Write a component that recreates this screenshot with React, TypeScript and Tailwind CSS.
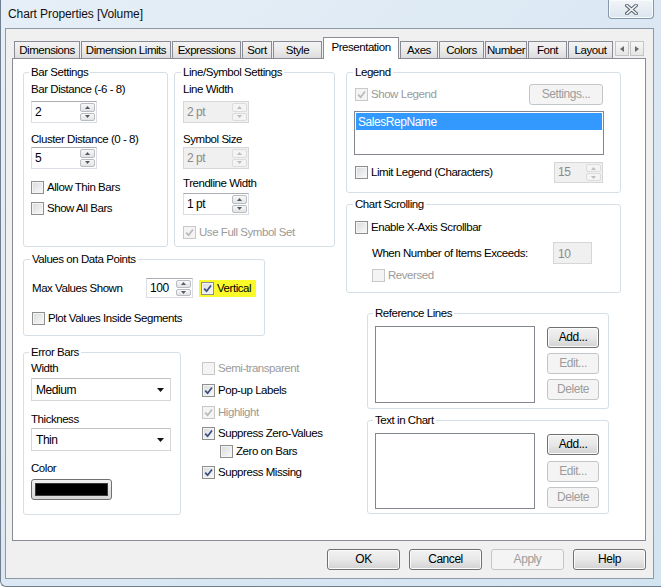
import type { ReactNode } from "react";

function Check({ checked, disabled }: { checked?: boolean; disabled?: boolean }) {
  return (
    <span
      className={`flex h-[13px] w-[13px] shrink-0 items-center justify-center border ${
        disabled
          ? "border-[#c8c8c8] bg-[#f4f4f4]"
          : "border-[#8e8f8f] bg-linear-to-br from-[#d8dadd] to-[#fafafa] shadow-[inset_0_0_0_1px_#f4f4f4]"
      }`}
    >
      {checked && (
        <svg width="9" height="9" viewBox="0 0 9 9">
          <path
            d="M1.2 4.6 L3.6 7.2 L8 1.4"
            fill="none"
            stroke={disabled ? "#b9b9b9" : "#3b4d86"}
            strokeWidth="1.7"
          />
        </svg>
      )}
    </span>
  );
}

function CheckRow({
  label,
  checked,
  disabled,
  className = "",
}: {
  label: string;
  checked?: boolean;
  disabled?: boolean;
  className?: string;
}) {
  return (
    <div className={`flex h-[13px] items-center gap-[3px] ${className}`}>
      <Check checked={checked} disabled={disabled} />
      <span className={`whitespace-nowrap leading-[13px] ${disabled ? "text-[#9a9a9a]" : "text-black"}`}>{label}</span>
    </div>
  );
}

function SpinBtn({ up, disabled }: { up?: boolean; disabled?: boolean }) {
  return (
    <span
      className={`flex flex-1 items-center justify-center rounded-[2px] border ${
        disabled ? "border-[#dcdcdc] bg-[#f4f4f4]" : "border-[#b9bcc0] bg-linear-to-b from-[#f8f8f8] to-[#e2e3e5]"
      }`}
    >
      <svg width="5" height="3" viewBox="0 0 5 3">
        <path d={up ? "M0 3 L2.5 0 L5 3Z" : "M0 0 L2.5 3 L5 0Z"} fill={disabled ? "#bdbdbd" : "#555a60"} />
      </svg>
    </span>
  );
}

function Spin({ value, className = "", disabled }: { value: string; className?: string; disabled?: boolean }) {
  return (
    <div
      className={`flex border ${
        disabled
          ? "border-[#d6d6d6] bg-[#f0f0f0] text-[#8a8a8a]"
          : "border-[#dadde3] border-t-[#abadb3] bg-white text-black"
      } ${className}`}
    >
      <span className="flex flex-1 items-center pl-[3px] pb-[1px] text-[12px]">{value}</span>
      <div className="flex w-[17px] flex-col gap-px p-px">
        <SpinBtn up disabled={disabled} />
        <SpinBtn disabled={disabled} />
      </div>
    </div>
  );
}

function Select({ value }: { value: string }) {
  return (
    <div className="flex h-[23px] w-[140px] items-center justify-between border border-[#d6d6d6] border-t-[#c2c2c2] bg-white pl-[4px] pr-[6px] text-[12px]">
      <span>{value}</span>
      <svg width="7" height="4" viewBox="0 0 7 4">
        <path d="M0 0 L7 0 L3.5 4Z" fill="#111" />
      </svg>
    </div>
  );
}

function Btn({ children, disabled, className = "" }: { children: ReactNode; disabled?: boolean; className?: string }) {
  return (
    <button
      type="button"
      className={`flex h-[21px] items-center justify-center rounded-[3px] border text-[12px] leading-[13px] ${
        disabled
          ? "border-[#c3c6c9] bg-[#f4f4f4] text-[#9c9c9c]"
          : "border-[#707070] bg-linear-to-b from-[#f2f2f2] via-[#e8e8e8] to-[#d2d2d2] text-black shadow-[inset_0_0_0_1px_#fbfbfb]"
      } ${className}`}
    >
      {children}
    </button>
  );
}

function Group({
  title,
  className = "",
  children,
}: {
  title: string;
  className?: string;
  children?: ReactNode;
}) {
  return (
    <fieldset className={`flex min-w-0 flex-col rounded-[3px] border border-[#d5dfe5] ${className}`}>
      <legend className="-ml-[2px] whitespace-nowrap px-[2px] leading-[13px]">{title}</legend>
      {children}
    </fieldset>
  );
}

const tabs: [string, string][] = [
  ["Dimensions", "w-[66px]"],
  ["Dimension Limits", "w-[90px]"],
  ["Expressions", "w-[69px]"],
  ["Sort", "w-[30px]"],
  ["Style", "w-[49px]"],
  ["Presentation", "w-[76px]"],
  ["Axes", "w-[38px]"],
  ["Colors", "w-[45px]"],
  ["Number", "w-[42px]"],
  ["Font", "w-[39px]"],
  ["Layout", "w-[45px]"],
];

export default function App() {
  return (
    <div className="h-[587px] w-[661px] overflow-hidden rounded-bl-[6px] border-b border-l border-[#6f7f8f] bg-linear-to-br from-[#e6eff7] via-[#dbe8f3] to-[#d3e4f1] font-['Liberation_Sans',Arial,sans-serif] text-[11.5px] tracking-[-0.45px] text-black">
      {/* Title bar */}
      <div className="flex h-[28px]">
        <div className="pl-[7px] pt-[6px] text-[12px] leading-[16px] tracking-[-0.1px] text-[#111]">
          Chart Properties [Volume]
        </div>
        <div className="ml-auto mr-[7px] flex h-[19px] w-[46px] items-center justify-center rounded-b-[4px] border border-t-0 border-[#8597ab] bg-linear-to-b from-[#f1f5f9] to-[#dbe5ee] shadow-[inset_0_0_0_1px_#f8fbfd]">
          <svg width="13" height="11" viewBox="0 0 13 11">
            <path d="M2 1.5 L11 9.5 M11 1.5 L2 9.5" stroke="#59626c" strokeWidth="3.6" strokeLinecap="square" />
            <path d="M2 1.5 L11 9.5 M11 1.5 L2 9.5" stroke="#f4f6f8" strokeWidth="1.6" strokeLinecap="square" />
          </svg>
        </div>
      </div>

      {/* Client area */}
      <div className="ml-[4px] mr-[7px] h-[551px] border border-[#8d9aa6] bg-[#f0f0f0] pl-[6px] pr-[7px] pt-[8px]">
        {/* Tabs */}
        <div className="flex h-[21px] items-end gap-[1px] pl-[2px]">
          {tabs.map(([name, w]) =>
            name === "Presentation" ? (
              <div
                key={name}
                className={`relative z-10 -mb-[1px] flex h-[22px] ${w} items-start justify-center border border-b-0 border-[#898c95] bg-white pt-[3px] leading-[13px]`}
              >
                {name}
              </div>
            ) : (
              <div
                key={name}
                className={`flex h-[17px] ${w} items-center justify-center whitespace-nowrap border border-b-0 border-[#898c95] bg-linear-to-b from-[#f3f3f3] via-[#ebebeb] to-[#dcdcdc] leading-[13px]`}
              >
                {name}
              </div>
            )
          )}
          <div className="mb-[2px] ml-[1px] flex h-[15px] gap-[1px]">
            {["M4 0 L0 3 L4 6Z", "M0 0 L4 3 L0 6Z"].map((d) => (
              <div key={d} className="flex w-[14px] items-center justify-center border border-[#c5c5c5] bg-linear-to-b from-[#f7f7f7] to-[#e6e6e6]">
                <svg width="4" height="6" viewBox="0 0 4 6">
                  <path d={d} fill="#6b6b6b" />
                </svg>
              </div>
            ))}
          </div>
        </div>

        {/* Tab page */}
        <div className="flex h-[483px] w-[634px] gap-[11px] border border-[#898c95] bg-white pl-[10px] pt-[7px]">
          {/* Left column */}
          <div className="flex w-[312px] flex-col">
            <div className="flex gap-[6px]">
              <Group title="Bar Settings" className="h-[181px] w-[145px] px-[7px]">
                <div className="mt-[4px] leading-[13px]">Bar Distance (-6 - 8)</div>
                <Spin value="2" className="mt-[5px] h-[22px] w-[66px]" />
                <div className="mt-[10px] leading-[13px]">Cluster Distance (0 - 8)</div>
                <Spin value="5" className="mt-[1px] h-[22px] w-[66px]" />
                <CheckRow label="Allow Thin Bars" className="mt-[12px]" />
                <CheckRow label="Show All Bars" className="mt-[8px]" />
              </Group>
              <Group title="Line/Symbol Settings" className="h-[181px] w-[161px] px-[8px]">
                <div className="mt-[4px] leading-[13px]">Line Width</div>
                <Spin value="2 pt" disabled className="mt-[5px] h-[22px] w-[66px]" />
                <div className="mt-[10px] leading-[13px]">Symbol Size</div>
                <Spin value="2 pt" disabled className="mt-[1px] h-[22px] w-[66px]" />
                <div className="mt-[8px] leading-[13px]">Trendline Width</div>
                <Spin value="1 pt" className="mt-[3px] h-[22px] w-[66px]" />
                <CheckRow label="Use Full Symbol Set" checked disabled className="mt-[11px]" />
              </Group>
            </div>

            <Group title="Values on Data Points" className="mt-[6px] h-[83px] w-[242px] px-[8px]">
              <div className="mt-[12px] flex h-[20px] items-center">
                <span className="w-[114px] leading-[13px]">Max Values Shown</span>
                <Spin value="100" className="h-[20px] w-[47px]" />
                <div className="ml-[6px] flex h-[17px] w-[57px] items-center bg-[#fafa2a] pl-[2px]">
                  <CheckRow label="Vertical" checked />
                </div>
              </div>
              <CheckRow label="Plot Values Inside Segments" className="mt-[14px]" />
            </Group>

            <div className="mt-[10px] flex">
              <Group title="Error Bars" className="h-[169px] w-[158px] px-[7px]">
                <div className="mt-[3px] leading-[13px]">Width</div>
                <div className="mt-[3px]">
                  <Select value="Medium" />
                </div>
                <div className="mt-[12px] leading-[13px]">Thickness</div>
                <div className="mt-[2px]">
                  <Select value="Thin" />
                </div>
                <div className="mt-[11px] leading-[13px]">Color</div>
                <div className="mt-[4px] flex h-[21px] w-[81px] rounded-[3px] border border-[#707070] bg-linear-to-b from-[#f2f2f2] to-[#d6d6d6] p-[3px]">
                  <div className="flex-1 border border-[#3a3a3a] bg-black" />
                </div>
              </Group>
              <div className="ml-[21px] flex flex-col pt-[16px]">
                <CheckRow label="Semi-transparent" disabled />
                <CheckRow label="Pop-up Labels" checked className="mt-[9px]" />
                <CheckRow label="Highlight" checked disabled className="mt-[9px]" />
                <CheckRow label="Suppress Zero-Values" checked className="mt-[8px]" />
                <CheckRow label="Zero on Bars" className="ml-[18px] mt-[5px]" />
                <CheckRow label="Suppress Missing" checked className="mt-[8px]" />
              </div>
            </div>
          </div>

          {/* Right column */}
          <div className="flex w-[275px] flex-col">
            <Group title="Legend" className="h-[127px] px-[8px]">
              <div className="mt-[5px] flex h-[20px] items-center justify-between">
                <CheckRow label="Show Legend" checked disabled />
                <Btn disabled className="mr-[9px] h-[20px] w-[74px]">
                  Settings...
                </Btn>
              </div>
              <div className="-ml-[1px] mt-[7px] h-[44px] w-[250px] border border-[#828790] bg-white p-px">
                <div className="flex h-[17px] items-center bg-[#3399ff] pl-[2px] text-[12px] text-white">SalesRepName</div>
              </div>
              <div className="mt-[7px] flex h-[21px] items-center justify-between">
                <CheckRow label="Limit Legend (Characters)" />
                <Spin value="15" disabled className="mr-[9px] h-[21px] w-[49px]" />
              </div>
            </Group>

            <Group title="Chart Scrolling" className="mt-[5px] h-[95px] px-[8px]">
              <CheckRow label="Enable X-Axis Scrollbar" className="mt-[10px]" />
              <div className="mt-[8px] flex h-[22px] items-center justify-between pl-[17px]">
                <span className="leading-[13px]">When Number of Items Exceeds:</span>
                <div className="mr-[20px] flex h-[22px] w-[39px] items-start border border-[#d6d6d6] bg-[#f0f0f0] pl-[4px] pt-[2px] text-[12px] text-[#8a8a8a]">
                  10
                </div>
              </div>
              <CheckRow label="Reversed" disabled className="ml-[17px] mt-[5px]" />
            </Group>

            <Group title="Reference Lines" className="ml-[21px] mt-[14px] h-[102px] w-[242px] px-[7px]">
              <div className="mt-[6px] flex">
                <div className="h-[77px] w-[160px] border border-[#828790] bg-white" />
                <div className="ml-[12px] mt-[1px] flex w-[52px] flex-col gap-[5px]">
                  <Btn>Add...</Btn>
                  <Btn disabled>Edit...</Btn>
                  <Btn disabled>Delete</Btn>
                </div>
              </div>
            </Group>

            <Group title="Text in Chart" className="ml-[21px] mt-[5px] h-[100px] w-[242px] px-[7px]">
              <div className="mt-[6px] flex">
                <div className="h-[76px] w-[160px] border border-[#828790] bg-white" />
                <div className="ml-[12px] mt-[1px] flex w-[52px] flex-col gap-[5px]">
                  <Btn>Add...</Btn>
                  <Btn disabled className="mt-[1px]">
                    Edit...
                  </Btn>
                  <Btn disabled>Delete</Btn>
                </div>
              </div>
            </Group>
          </div>
        </div>

        {/* Dialog buttons */}
        <div className="mt-[8px] flex justify-end gap-[9px]">
          <Btn className="w-[73px]">OK</Btn>
          <Btn className="w-[73px]">Cancel</Btn>
          <Btn disabled className="w-[73px]">
            Apply
          </Btn>
          <Btn className="w-[73px]">Help</Btn>
        </div>
      </div>
    </div>
  );
}
